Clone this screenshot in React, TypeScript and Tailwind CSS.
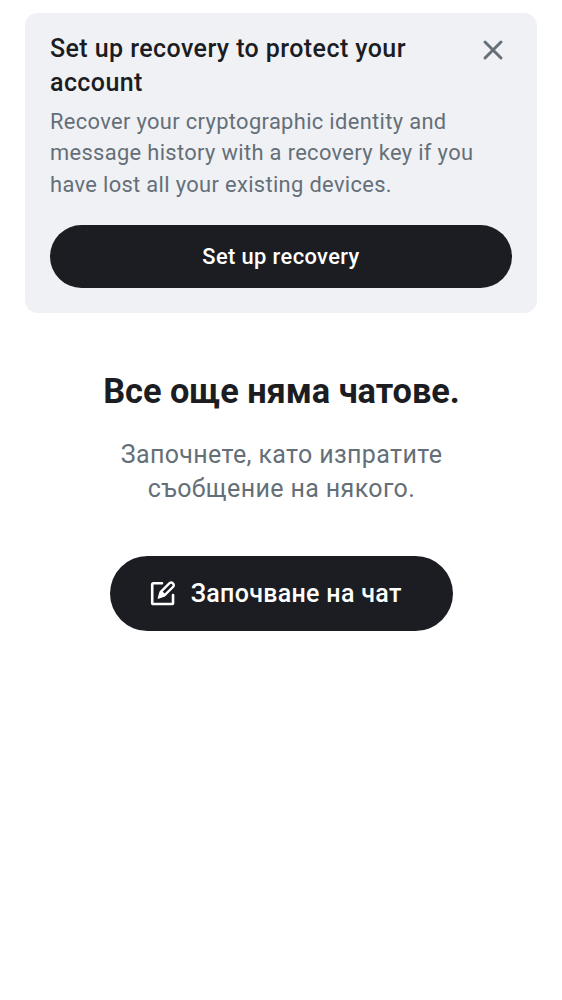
import React from "react";

function CloseIcon() {
  return (
    <svg width="32" height="32" viewBox="0 0 24 24" fill="none" stroke="#646f78" strokeWidth="2.2" strokeLinecap="round" aria-hidden="true">
      <path d="M6 6 18 18M18 6 6 18" />
    </svg>
  );
}

function ComposeIcon() {
  return (
    <svg width="31.25" height="31.25" viewBox="0 0 24 24" fill="none" stroke="#fff" strokeLinecap="round" strokeLinejoin="round" aria-hidden="true">
      <path strokeWidth="2" d="M11.500 4H5a1 1 0 0 0-1 1v14a1 1 0 0 0 1 1h14a1 1 0 0 0 1-1v-6" />
      <path strokeWidth="1.800" d="m10.600 10.600 6.700-6.700a2 2 0 0 1 2.800 2.800L13.400 13.400z" />
      <path fill="#fff" strokeWidth="1" d="M9.800 11.500q.6-1.300 1.300-1.100l2.500 2.500q.2.700-1.100 1.300L8.700 15.500z" />
    </svg>
  );
}

function RecoveryBanner() {
  return (
    <section className="mx-[25px] mt-[12.500px] rounded-[12.500px] bg-[#f0f1f5] p-[25px] pt-[19px]">
      <div className="flex items-start justify-between">
        <h2 className="text-[25px] leading-[34.400px] font-medium tracking-[0.420px]">
          Set up recovery to protect your<br />account
        </h2>
        <button aria-label="Close" className="mt-[2px] mr-[3px]"><CloseIcon /></button>
      </div>
      <p className="mt-[5.700px] text-[21.875px] leading-[31.250px] tracking-[0.350px] text-[#646f78]">
        Recover your cryptographic identity and<br />message history with a recovery key if you<br />have lost all your existing devices.
      </p>
      <button className="mt-[25.300px] flex h-[62.500px] w-full items-center justify-center rounded-full bg-[#1b1d22] pt-[2px] text-[21.875px] font-medium tracking-[0.400px] text-white">
        Set up recovery
      </button>
    </section>
  );
}

export default function App() {
  return (
    <main className="h-[1000px] overflow-hidden bg-white font-[Roboto,sans-serif] text-[#1b1d22]">
      <RecoveryBanner />
      <section className="mt-[56px] flex flex-col items-center text-center">
        <h1 className="pl-px text-[34.375px] leading-[44px] font-bold tracking-[-0.040px]">Все още няма чатове.</h1>
        <p className="mt-[25px] pl-px text-[25px] leading-[34.400px] tracking-[0.370px] text-[#646f78]">
          Започнете, като изпратите<br />съобщение на някого.
        </p>
        <button className="mt-[50px] flex h-[75px] w-[343px] items-center gap-[12.500px] rounded-full bg-[#1b1d22] pl-[37.500px] text-[25px] font-medium tracking-[0.320px] text-white">
          <ComposeIcon />
          Започване на чат
        </button>
      </section>
    </main>
  );
}
